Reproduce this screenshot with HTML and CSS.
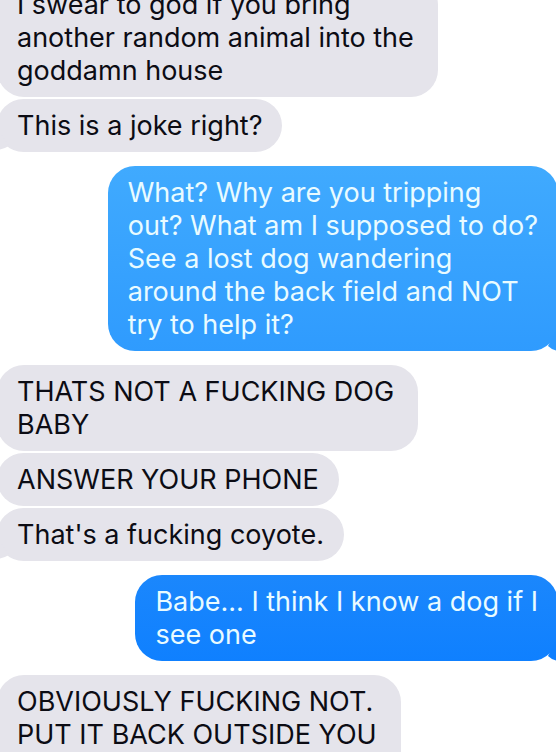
FILE: index.html
```html
<!DOCTYPE html>
<html lang="en">
<head>
  <meta charset="UTF-8" />
  <meta name="viewport" content="width=device-width, initial-scale=1" />
  <title>Messages</title>
  <link rel="stylesheet" href="styles.css">
</head>
<body>

  <main class="thread">
    <div class="group received">
      <p class="bubble multi">I swear to god if you bring<br>another random animal into the<br>goddamn house</p>
      <p class="bubble">This is a joke right?
        <svg class="tail" viewBox="0 0 20 28" aria-hidden="true"><path d="M0 4V26Q7 25 12 22Z" /></svg>
      </p>
    </div>

    <div class="group sent">
      <p class="bubble light">What? Why are you tripping<br>out? What am I supposed to do?<br>See a lost dog wandering<br>around the back field and NOT<br>try to help it?
        <svg class="tail" viewBox="0 0 20 28" aria-hidden="true"><path d="M20 4V28Q14 27 10 23Z" /></svg>
      </p>
    </div>

    <div class="group received">
      <p class="bubble multi">THATS NOT A FUCKING DOG<br>BABY</p>
      <p class="bubble">ANSWER YOUR PHONE</p>
      <p class="bubble">That's a fucking coyote.
        <svg class="tail" viewBox="0 0 20 28" aria-hidden="true"><path d="M0 4V26Q7 25 12 22Z" /></svg>
      </p>
    </div>

    <div class="group sent">
      <p class="bubble">Babe... I think I know a dog if I<br>see one
        <svg class="tail" viewBox="0 0 20 28" aria-hidden="true"><path d="M20 4V28Q14 27 10 23Z" /></svg>
      </p>
    </div>

    <div class="group received">
      <p class="bubble multi open">OBVIOUSLY FUCKING NOT.<br>PUT IT BACK OUTSIDE YOU</p>
    </div>
  </main>

</body>
</html>
```
FILE: styles.css
```css
body {
  margin: 0;
  height: 100vh;
  overflow: hidden;
  background: #fff;
  font-family: Inter, "Liberation Sans", sans-serif;
  font-size: 27px;
  line-height: 33px;
  color: #0c0c14;
}

/* scrolled part way into the first message */
.thread {
  display: flex;
  flex-direction: column;
  gap: 14px;
  margin: -22px -2px 0 -3px;
}

.group {
  display: flex;
  flex-direction: column;
  gap: 2px;
}

.received {
  align-items: flex-start;
}

.sent {
  align-items: flex-end;
}

.bubble {
  position: relative;
  margin: 0;
  padding: 10px 20px;
  border-radius: 27px;
  background: #e5e4eb;
  white-space: nowrap;
}

.multi {
  padding-right: 24px;
}

.sent .bubble {
  background: linear-gradient(#1b87fc, #0f80ff);
  color: #e9fbff;
}

.sent .light {
  background: linear-gradient(#40aafe, #2f9bfe);
}

/* message carries on below the window */
.open {
  border-radius: 27px 27px 0 0;
}

.tail {
  position: absolute;
  bottom: 0;
  width: 20px;
  height: 28px;
}

.received .tail {
  left: 0;
  fill: #e5e4eb;
}

.sent .tail {
  right: 0;
  fill: #0f80ff;
}

.sent .light .tail {
  fill: #2f9bfe;
}
```
